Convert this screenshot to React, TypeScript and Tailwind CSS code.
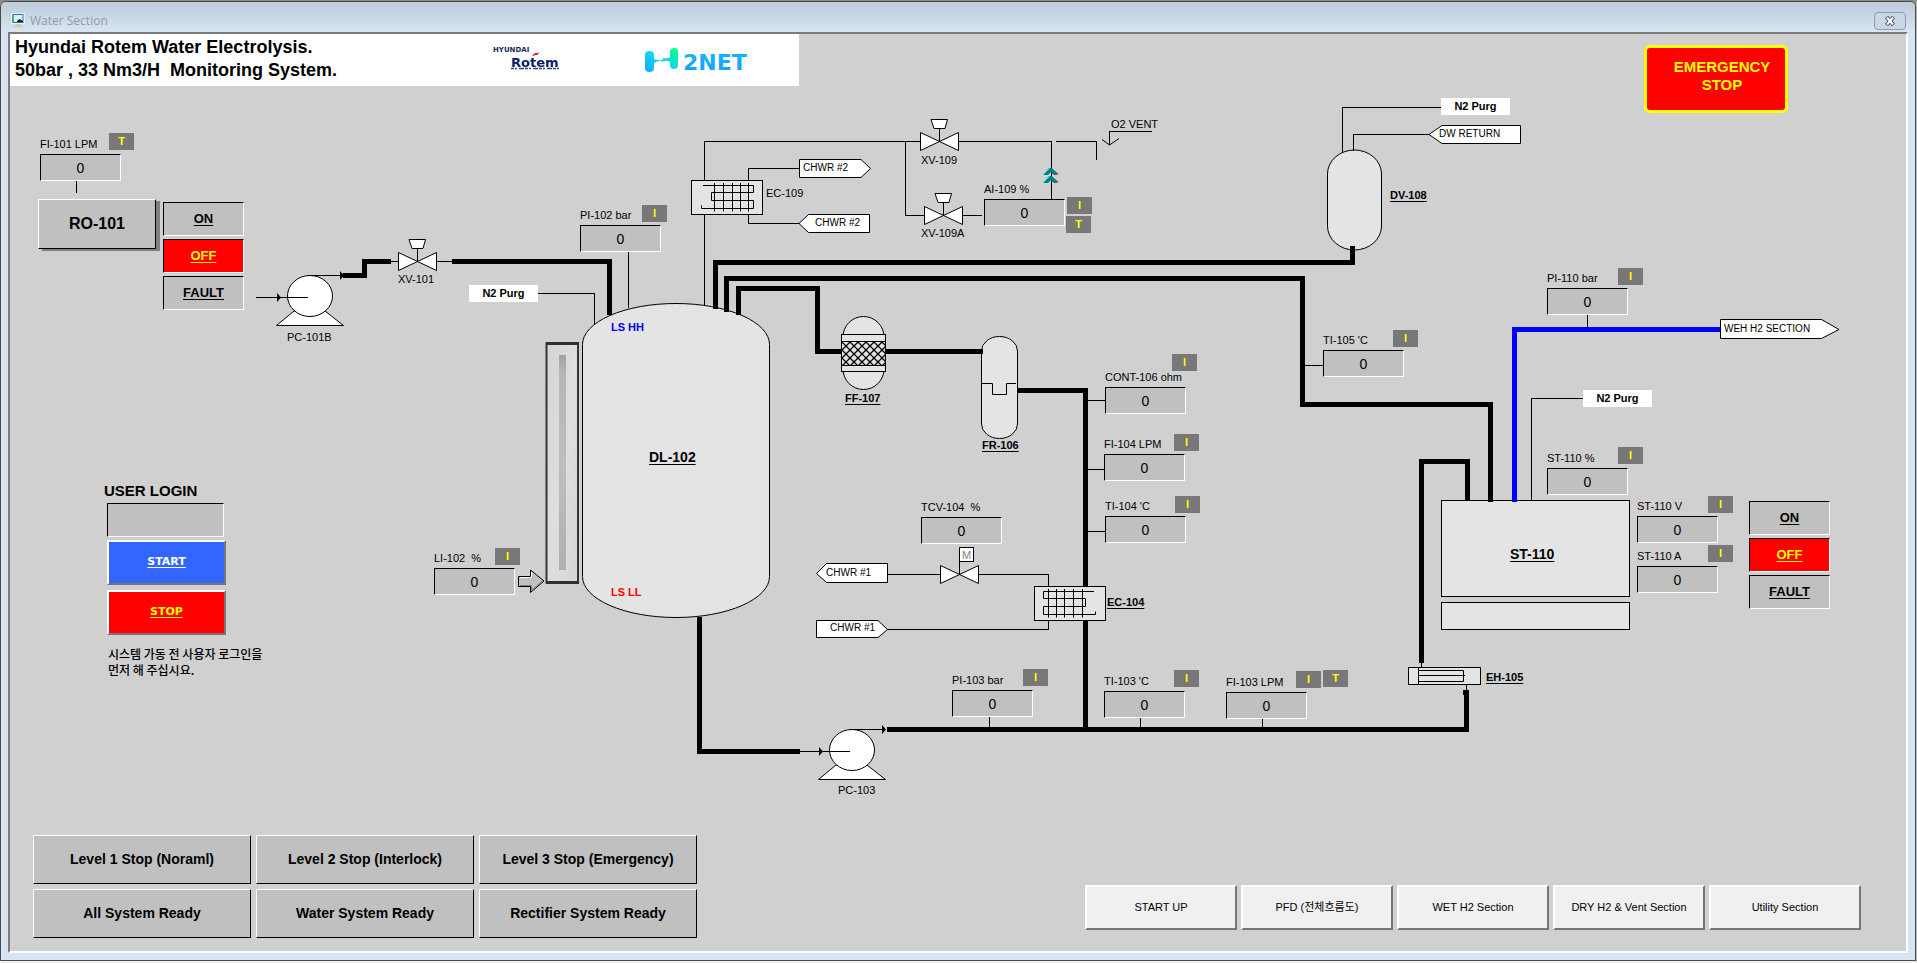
import React from "react";
import clsx from "clsx";

type Reading = { label: string; value: string; place: string };
type Placed = { text: string; place: string };

const readings: Reading[] = [
  { label: "FI-101 LPM", value: "0", place: "left-[40px] top-[136px]" },
  { label: "PI-102 bar", value: "0", place: "left-[580px] top-[207px]" },
  { label: "AI-109 %", value: "0", place: "left-[984px] top-[181px]" },
  { label: "CONT-106 ohm", value: "0", place: "left-[1105px] top-[369px]" },
  { label: "FI-104 LPM", value: "0", place: "left-[1104px] top-[436px]" },
  { label: "TI-104 'C", value: "0", place: "left-[1105px] top-[498px]" },
  { label: "TCV-104  %", value: "0", place: "left-[921px] top-[499px]" },
  { label: "PI-103 bar", value: "0", place: "left-[952px] top-[672px]" },
  { label: "TI-103 'C", value: "0", place: "left-[1104px] top-[673px]" },
  { label: "FI-103 LPM", value: "0", place: "left-[1226px] top-[674px]" },
  { label: "TI-105 'C", value: "0", place: "left-[1323px] top-[332px]" },
  { label: "PI-110 bar", value: "0", place: "left-[1547px] top-[270px]" },
  { label: "ST-110 %", value: "0", place: "left-[1547px] top-[450px]" },
  { label: "ST-110 V", value: "0", place: "left-[1637px] top-[498px]" },
  { label: "ST-110 A", value: "0", place: "left-[1637px] top-[548px]" },
  { label: "LI-102  %", value: "0", place: "left-[434px] top-[550px]" },
];

const tags: Placed[] = [
  { text: "T", place: "left-[109px] top-[133px]" },
  { text: "I", place: "left-[642px] top-[205px]" },
  { text: "I", place: "left-[1067px] top-[197px]" },
  { text: "T", place: "left-[1066px] top-[216px]" },
  { text: "I", place: "left-[1172px] top-[354px]" },
  { text: "I", place: "left-[1174px] top-[434px]" },
  { text: "I", place: "left-[1175px] top-[496px]" },
  { text: "I", place: "left-[1023px] top-[669px]" },
  { text: "I", place: "left-[1174px] top-[670px]" },
  { text: "I", place: "left-[1296px] top-[671px]" },
  { text: "T", place: "left-[1323px] top-[670px]" },
  { text: "I", place: "left-[1393px] top-[330px]" },
  { text: "I", place: "left-[1618px] top-[268px]" },
  { text: "I", place: "left-[1618px] top-[447px]" },
  { text: "I", place: "left-[1708px] top-[496px]" },
  { text: "I", place: "left-[1708px] top-[545px]" },
  { text: "I", place: "left-[495px] top-[548px]" },
];

const plainNames: Placed[] = [
  { text: "XV-101", place: "left-[398px] top-[271px]" },
  { text: "PC-101B", place: "left-[287px] top-[329px]" },
  { text: "EC-109", place: "left-[766px] top-[185px]" },
  { text: "XV-109", place: "left-[921px] top-[152px]" },
  { text: "XV-109A", place: "left-[921px] top-[225px]" },
  { text: "O2 VENT", place: "left-[1111px] top-[116px]" },
  { text: "PC-103", place: "left-[838px] top-[782px]" },
];

const boldNames: Placed[] = [
  { text: "FF-107", place: "left-[845px] top-[390px]" },
  { text: "FR-106", place: "left-[982px] top-[437px]" },
  { text: "EC-104", place: "left-[1107px] top-[594px]" },
  { text: "EH-105", place: "left-[1486px] top-[669px]" },
  { text: "DV-108", place: "left-[1390px] top-[187px]" },
];

const bigNames: Placed[] = [
  { text: "DL-102", place: "left-[649px] top-[449px]" },
  { text: "ST-110", place: "left-[1510px] top-[546px]" },
];

const flagTexts: Placed[] = [
  { text: "CHWR #2", place: "left-[803px] top-[160px]" },
  { text: "CHWR #2", place: "left-[815px] top-[215px]" },
  { text: "CHWR #1", place: "left-[826px] top-[565px]" },
  { text: "CHWR #1", place: "left-[830px] top-[620px]" },
  { text: "DW RETURN", place: "left-[1439px] top-[126px]" },
  { text: "WEH H2 SECTION", place: "left-[1724px] top-[321px]" },
];

const purgePlaces = [
  "left-[469px] top-[285px]",
  "left-[1441px] top-[98px]",
  "left-[1583px] top-[390px]",
];

const stopButtons = [
  "Level 1 Stop (Noraml)",
  "Level 2 Stop (Interlock)",
  "Level 3 Stop (Emergency)",
  "All System Ready",
  "Water System Ready",
  "Rectifier System Ready",
];

const pages = ["START UP", "PFD (전체흐름도)", "WET H2 Section", "DRY H2 & Vent Section", "Utility Section"];

const sunken = "border border-t-black border-l-black border-r-white border-b-white";

function Gauge({ label, value, place }: Reading) {
  const id = label.replace(/[^A-Za-z0-9]+/g, "-");
  return (
    <div className={clsx("absolute flex flex-col gap-0.5", place)}>
      <label htmlFor={id} className="h-4 whitespace-pre text-[11px] leading-4">
        {label}
      </label>
      <output id={id} className={clsx("flex h-[27px] w-[81px] items-center justify-center bg-[#c0c0c0] text-sm", sunken)}>
        {value}
      </output>
    </div>
  );
}

function StatusStack({ place }: { place: string }) {
  const base = "h-[34px] w-[81px] text-[13px] font-bold leading-4 underline underline-offset-2";
  return (
    <div className={clsx("absolute flex flex-col gap-[3px]", place)}>
      <button className={clsx(base, sunken, "bg-[#c0c0c0]")}>ON</button>
      <button className={clsx(base, sunken, "bg-[#ff0000] text-[#ffff00]")}>OFF</button>
      <button className={clsx(base, sunken, "bg-[#c0c0c0]")}>FAULT</button>
    </div>
  );
}

function Valve({ x, y, motor = false }: { x: number; y: number; motor?: boolean }) {
  return (
    <g transform={`translate(${x} ${y})`} stroke="#000" fill="#fff">
      <path d="M-19 -9V9L19 -9V9Z" />
      {motor ? (
        <>
          <path d="M0 -13V0" />
          <rect x="0" y="-27" width="14" height="14" />
        </>
      ) : (
        <>
          <path d="M0 -13V0" />
          <path d="M-8.500 -22H8L5.500 -13H-5.500Z" />
        </>
      )}
    </g>
  );
}

function Pump({ x, y }: { x: number; y: number }) {
  return (
    <g transform={`translate(${x} ${y})`} stroke="#000" fill="#fff">
      <path d="M-16 15L-33.500 29.500H33.500L15 15Z" />
      <ellipse cx="0" cy="0" rx="22.500" ry="20.500" />
      <path d="M-54 1.500H-2M-2 -20.500H33" fill="none" />
      <path d="M-33 -3L-29 1.500L-33 6ZM30 -25L34 -20.500L30 -16Z" fill="#000" stroke="none" />
    </g>
  );
}

function Cooler() {
  return (
    <>
      <rect width="71" height="34" fill="#e4e4e4" />
      <path d="M11.500 5H62V12H20V20H62V28H10V25" fill="none" />
      <path d="M23 2.500V31M32 2.500V31M41 2.500V31M49 2.500V31M57 2.500V31" />
    </>
  );
}

function Piping() {
  return (
    <svg width="1917" height="963" viewBox="0 0 1917 963" className="pointer-events-none absolute left-0 top-0 max-w-none" aria-hidden="true">
      <defs>
        <pattern id="mesh" x="842" y="342" width="8" height="8" patternUnits="userSpaceOnUse">
          <path d="M0 0L8 8M8 0L0 8" stroke="#000" strokeWidth="1.300" />
        </pattern>
        <linearGradient id="glass" x1="0" y1="0" x2="1" y2="1">
          <stop offset="0" stopColor="#d4d4d4" />
          <stop offset="0.500" stopColor="#dededd" />
          <stop offset="1" stopColor="#d6d6d6" />
        </linearGradient>
        <linearGradient id="slot" x1="0" y1="0" x2="0" y2="1">
          <stop offset="0" stopColor="#a2a2a2" />
          <stop offset="0.080" stopColor="#b6b6b6" />
          <stop offset="0.500" stopColor="#bebebe" />
          <stop offset="1" stopColor="#b0b0b0" />
        </linearGradient>
      </defs>

      {/* vessels */}
      <g fill="#e4e4e4" stroke="#000">
        <path d="M582.500 344.500A93.500 41 0 0 1 769.500 344.500V576.500A93.500 41 0 0 1 582.500 576.500Z" />
        <path d="M1327.500 174A27 24 0 0 1 1381.500 174V226A27 24 0 0 1 1327.500 226Z" />
        <ellipse cx="863.500" cy="337" rx="20.500" ry="20.500" />
        <ellipse cx="863.500" cy="369" rx="20.500" ry="20.500" />
        <rect x="841.500" y="334.500" width="44" height="37" />
        <path d="M981.500 351A18 14.500 0 0 1 1017.500 351V424A18 14.500 0 0 1 981.500 424Z" />
        <path d="M982 383.500H992.500V394.500H1006.500V383.500H1016" fill="none" />
        <rect x="1441.500" y="500.500" width="188" height="96" />
        <rect x="1441.500" y="602.500" width="188" height="27" />
        <rect x="1408.500" y="667.500" width="72" height="17" />
        <path d="M1418.500 667V684M1418.500 670.500H1463.500V681.500H1418.500M1418.500 675.500H1465" fill="none" />
      </g>
      <rect x="841.500" y="341.500" width="44" height="24" fill="url(#mesh)" stroke="#000" />

      {/* instrument and service lines */}
      <g fill="none" stroke="#000" shapeRendering="crispEdges">
        <path d="M76.500 181V193" />
        <path d="M390 261.500H398M436 261.500H452" />
        <path d="M628.500 252V308M538 293.500H594.500V325" />
        <path d="M704.500 180V141.500H921M704.500 214V305" />
        <path d="M748.500 180V168.500H799M748.500 214V223.500H799" />
        <path d="M905.500 141V215.500H924M962 215.500H982" />
        <path d="M958 141.500H1051.500V199M1056 141.500H1096.500V160" />
        <path d="M1152 131.500H1109.500V145" />
        <path d="M1441 107.500H1342.500V153M1429 134.500H1353.500V151" />
        <path d="M1305 365.500H1323M1088 400.500H1105M1088 469.500H1104M1088 531.500H1105" />
        <path d="M887 574.500H941M978 574.500H1048.500V586M887 629.500H1048.500V621" />
        <path d="M989.500 717V728M1140.500 718V728M1262.500 719V728" />
        <path d="M1587.500 315V328M1585 398.500H1531.500V500" />
        <path d="M1421.500 662V667M1466.500 685V691" />
      </g>
      <path d="M1102 139.500L1109.500 145L1119 138.500" fill="none" stroke="#000" />

      {/* process pipes */}
      <g fill="none" stroke="#000" strokeWidth="5" shapeRendering="crispEdges">
        <path d="M343 275.500H364.500V261.500H391" />
        <path d="M452 261.500H609.500V315" />
        <path d="M715.500 309V262.500H1352.500V246" />
        <path d="M726.500 312V278.500H1302.500V404.500H1490.500V502" />
        <path d="M738.500 315V288.500H817.500V351.500H842M885 351.500H983" />
        <path d="M1018 390.500H1085.500V586M1085.500 621V729" />
        <path d="M699.500 617V751.500H800" />
        <path d="M887 729.500H1466.500V690" />
        <path d="M1463 692.500H1468" />
        <path d="M1421.500 663V461.500H1467.500V501" />
        <path d="M1514.500 502V329.500H1721" stroke="#0000ff" />
      </g>

      <g transform="translate(691.500 180.500)" stroke="#000">
        <Cooler />
      </g>
      <g transform="translate(1105.500 586.500) scale(-1 1)" stroke="#000">
        <Cooler />
      </g>

      <Valve x={417.5} y={261.5} />
      <Valve x={939.5} y={141.5} />
      <Valve x={943.5} y={215.5} />
      <Valve x={959.5} y={574.5} motor />
      <Pump x={310} y={296} />
      <Pump x={852} y={750} />

      {/* off-page connectors */}
      <g fill="#fff" stroke="#000">
        <path d="M799.500 159.500H861L870.500 168.500L861 177.500H799.500Z" />
        <path d="M869.500 214.500H808.500L799 223.500L808.500 232.500H869.500Z" />
        <path d="M887.500 563.500H826.500L816.500 573.500L826.500 582.500H887.500Z" />
        <path d="M816.500 620.500H878L887.500 629.500L878 637.500H816.500Z" />
        <path d="M1520.500 125.500H1442L1429 134.500L1442 143.500H1520.500Z" />
        <path d="M1720.500 319.500H1821.500L1839 329.500L1821.500 338.500H1720.500Z" />
      </g>

      {/* vent flow arrows */}
      {[168, 176].map((y) => (
        <g key={y} transform={`translate(1051 ${y})`}>
          <path d="M0 0L8 6H5L0 3.500Z" fill="#707070" />
          <path d="M-8 7L-2 0H1L7 7H3L0 4L-3 7Z" fill="#008080" />
          <path d="M-8 7L-1 0" stroke="#00e0e0" />
        </g>
      ))}

      {/* sight glass */}
      <rect x="546.500" y="343.500" width="31.500" height="239" fill="url(#glass)" stroke="#363636" strokeWidth="2" />
      <path d="M546 343.500H579M546 582.500H579" stroke="#303030" strokeWidth="3" />
      <rect x="559" y="355" width="7" height="215" fill="url(#slot)" />
      <path d="M518.500 576.500H530.500V570L544 581L530.500 592.500V586.500H518.500Z" fill="#c0c0c0" stroke="#000" />
      <path d="M520 577.500H531.500V572" fill="none" stroke="#fff" />
      <path d="M520 585.500H531.500V590L542 581.500" fill="none" stroke="#808080" />
    </svg>
  );
}

function Banner() {
  return (
    <header className="flex h-[52px] w-[789px] bg-white pl-[5px]">
      <h1 className="w-[477px] whitespace-pre pt-0.5 text-[18px] font-bold leading-[23px]">
        {"Hyundai Rotem Water Electrolysis.\n50bar , 33 Nm3/H  Monitoring System."}
      </h1>
      <svg width="300" height="52" viewBox="0 0 300 52" role="img" aria-label="Hyundai Rotem, H2NET">
        <defs>
          <linearGradient id="h2" x1="0" y1="1" x2="1" y2="0">
            <stop offset="0" stopColor="#16a8ff" />
            <stop offset="0.500" stopColor="#10d8f0" />
            <stop offset="1" stopColor="#08ff80" />
          </linearGradient>
          <linearGradient id="net" x1="0" y1="0" x2="0" y2="1">
            <stop offset="0" stopColor="#14b8ff" />
            <stop offset="1" stopColor="#1a9cff" />
          </linearGradient>
        </defs>
        <text x="1" y="18" fontSize="7" fontFamily="DejaVu Sans" fontWeight="700" fill="#1a2a60">HYUNDAI</text>
        <text x="19" y="33" fontSize="13" fontFamily="DejaVu Sans" fontWeight="700" fill="#0c2268">Rotem</text>
        <path d="M40 22L42 19.500L47 18.500L46 20.500Z" fill="#f01020" />
        <path d="M19 34.500H69" stroke="#33406e" strokeWidth="1.500" strokeDasharray="3 1 2 2 5 1" />
        <path d="M153 21Q153 17 157.500 17Q162 17 162 21V25Q166 27 171 25.500V24Q175 25 178 23V18Q178 14 182.500 14Q186 14 186 18V31Q186 35 182 35Q178 35 178 31V28Q175 26 171 27.500Q166 26 162 29V34Q162 38 157.500 38Q153 38 153 34Z" fill="url(#h2)" />
        <text x="191" y="36" fontSize="22" fontFamily="DejaVu Sans" fontWeight="700" fill="url(#net)">2NET</text>
      </svg>
    </header>
  );
}

function LoginPanel() {
  const raised =
    "h-[45px] w-[119px] border-2 border-t-white border-l-white border-r-[#757575] border-b-[#757575] font-['DejaVu_Sans',sans-serif] text-[11px] font-bold underline underline-offset-2";
  return (
    <form className="absolute left-[104px] top-[481px] flex flex-col" onSubmit={(e) => e.preventDefault()}>
      <label htmlFor="user" className="h-[22px] text-[15px] font-bold leading-5">
        USER LOGIN
      </label>
      <div className="flex flex-col items-start pl-[3px]">
        <input id="user" type="text" className={clsx("mb-[3px] h-[34px] w-[117px] bg-[#c0c0c0] px-2 text-sm", sunken)} />
        <div className="flex flex-col gap-[5px]">
          <button type="submit" className={clsx(raised, "bg-[#3366ff] text-white")}>START</button>
          <button type="button" className={clsx(raised, "bg-[#ff0000] text-[#ffff00]")}>STOP</button>
        </div>
        <p className="mt-[11px] whitespace-pre pl-px font-['Noto_Sans_CJK_KR',sans-serif] text-xs font-medium leading-4">
          {"시스템 가동 전 사용자 로그인을\n먼저 해 주십시요."}
        </p>
      </div>
    </form>
  );
}

function TextSet({ items, look }: { items: Placed[]; look: string }) {
  return (
    <>
      {items.map((t) => (
        <span key={t.place} className={clsx("absolute whitespace-nowrap leading-4", look, t.place)}>
          {t.text}
        </span>
      ))}
    </>
  );
}

function Diagram() {
  return (
    <section aria-label="Water section flow diagram">
      <Piping />
      {readings.map((r) => (
        <Gauge key={r.label} {...r} />
      ))}
      {tags.map((t) => (
        <span
          key={t.place}
          className={clsx("absolute flex h-[17px] w-[25px] items-center justify-center bg-[#787878] pb-0.5 text-[11px] font-bold leading-4 text-[#ffff00]", t.place)}
        >
          {t.text}
        </span>
      ))}
      {purgePlaces.map((p) => (
        <span key={p} className={clsx("absolute h-[17px] w-[69px] bg-white text-center text-[11px] font-bold leading-4", p)}>
          N2 Purg
        </span>
      ))}
      <TextSet items={plainNames} look="text-[11px]" />
      <TextSet items={boldNames} look="text-[11px] font-bold underline underline-offset-2" />
      <TextSet items={bigNames} look="text-sm font-bold underline underline-offset-2" />
      <TextSet items={flagTexts} look="text-[10px]" />
      <span className="absolute left-[611px] top-[319px] text-[11px] font-bold leading-4 text-[#0000ff]">LS HH</span>
      <span className="absolute left-[611px] top-[584px] text-[11px] font-bold leading-4 text-[#ff0000]">LS LL</span>
      <span className="absolute left-[962px] top-[547px] text-[11px] leading-4 text-[#8a8078]">M</span>

      <button className="absolute left-[38px] top-[199px] h-[50px] w-[118px] border border-b-black border-l-white border-r-black border-t-white bg-[#c0c0c0] text-base font-bold shadow-[4px_2px_0_#808080]">
        RO-101
      </button>
      <StatusStack place="left-[163px] top-[202px]" />
      <StatusStack place="left-[1749px] top-[501px]" />
      <button className="absolute left-[1644px] top-[45px] h-[68px] w-[144px] rounded-md border-[3px] border-[#ffff00] bg-[#ff0000] pb-1.5 pl-3 text-[15px] font-bold leading-[18px] text-[#ffff00]">
        EMERGENCY
        <br />
        STOP
      </button>
      <LoginPanel />
    </section>
  );
}

function TitleBar() {
  return (
    <div className="flex h-[30px] items-center gap-1 bg-linear-to-b from-[#bccad9] to-[#d8e5f2] pl-[10px] pr-[9px] pt-[7px]">
      <svg width="15" height="15" viewBox="0 0 15 15" aria-hidden="true">
        <rect x="0.500" y="0.500" width="13" height="10" fill="#f4f8fb" stroke="#e8eef4" />
        <rect x="2" y="1.500" width="10" height="8" fill="#d8f0fa" stroke="#2474b4" />
        <path d="M2 2V9" stroke="#3cae4a" strokeWidth="1.500" />
        <path d="M6 8L8.500 6L12 8V9H6Z" fill="#222" />
        <path d="M5 12H10M3 13.500H12" stroke="#d8c9a0" strokeWidth="1.500" />
      </svg>
      <span className="flex-1 font-['Open_Sans',sans-serif] text-xs leading-4 text-[#979a9e]">Water Section</span>
      <button aria-label="Close" className="flex h-[18px] w-8 items-center justify-center rounded-sm border border-[#8d9bb3] bg-[#c9d6e4]">
        <svg width="12" height="10" viewBox="0 0 12 10" aria-hidden="true">
          <path d="M2.500 1L9.500 9M9.500 1L2.500 9" stroke="#4c5468" strokeWidth="4" />
          <path d="M3 1.500L9 8.500M9 1.500L3 8.500" stroke="#fff" strokeWidth="2" />
        </svg>
      </button>
    </div>
  );
}

export default function App() {
  return (
    <main className="relative flex min-h-screen flex-col overflow-hidden bg-[#8a8a84] pt-px font-['Liberation_Sans','Noto_Sans_CJK_KR',sans-serif] text-black">
      <div className="flex flex-1 flex-col border-b-2 border-r border-b-[#f0f0f0] border-r-[#b4b4b4]">
        <div className="flex flex-1 flex-col overflow-clip rounded-t-md border border-[#4a4a4a] bg-[#d7e4f2]">
          <TitleBar />
          <div className="mx-[7px] mb-[7px] flex flex-1 flex-col justify-between border-2 border-b-white border-l-[#7b7b7b] border-r-white border-t-[#7b7b7b] bg-[#d0d0d0]">
            <Banner />
            <Diagram />
            <footer className="flex items-end justify-between pb-[13px] pl-[23px] pr-[45px]">
              <div className="grid grid-cols-3 gap-[5px]">
                {stopButtons.map((b) => (
                  <button key={b} className="h-[49px] w-[218px] border border-b-black border-l-white border-r-black border-t-white bg-[#c0c0c0] pb-0.5 text-sm font-bold">
                    {b}
                  </button>
                ))}
              </div>
              <nav className="flex gap-1 pb-2">
                {pages.map((p) => (
                  <button key={p} className="h-[45px] w-[152px] border-2 border-b-[#757575] border-l-white border-r-[#757575] border-t-white bg-[#f0f0f0] text-[11px]">
                    {p}
                  </button>
                ))}
              </nav>
            </footer>
          </div>
        </div>
      </div>
    </main>
  );
}
